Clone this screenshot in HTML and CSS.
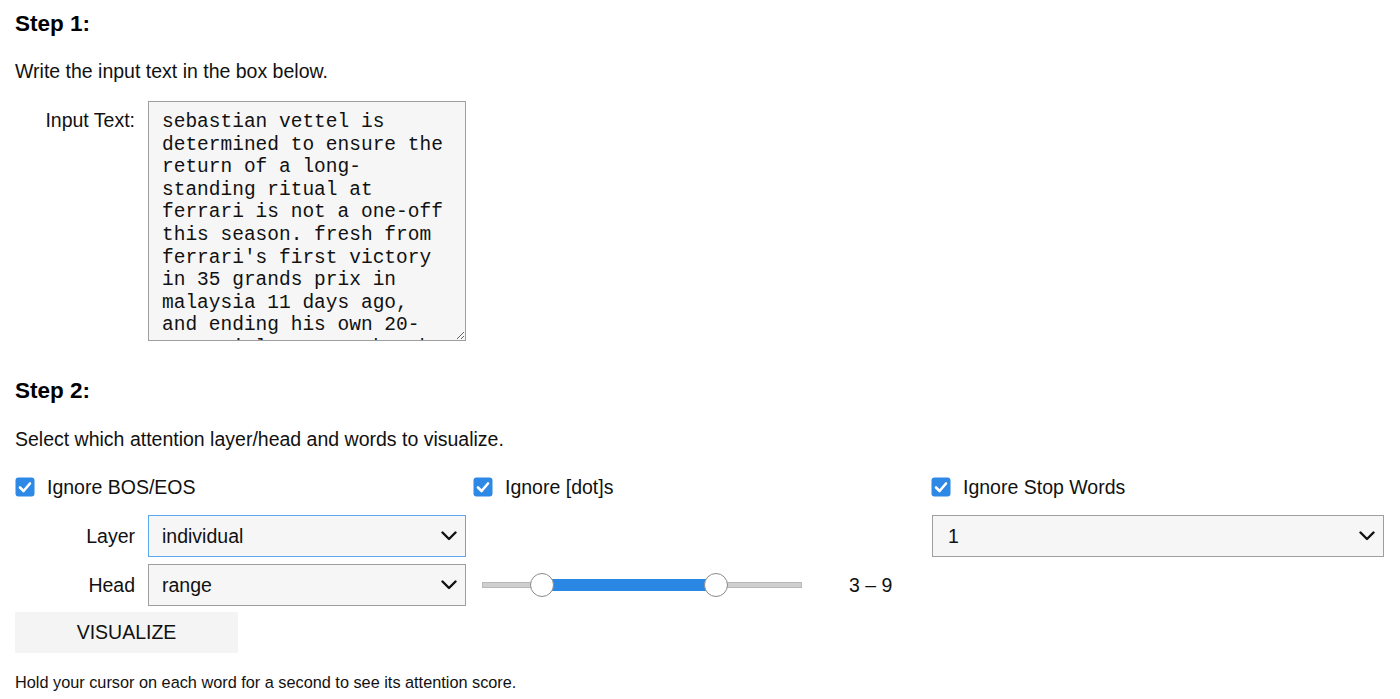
FILE: index.html
```html
<!DOCTYPE html>
<html>
<head>
<meta charset="utf-8">
<link rel="stylesheet" href="styles.css">
</head>
<body>
<div class="page">
  <h3 class="step">Step 1:</h3>
  <p class="intro">Write the input text in the box below.</p>
  <div class="input-row">
    <label class="desc desc-top" for="txt">Input Text:</label>
    <textarea id="txt" class="textarea" spellcheck="false">sebastian vettel is determined to ensure the return of a long-standing ritual at ferrari is not a one-off this season. fresh from ferrari's first victory in 35 grands prix in malaysia 11 days ago, and ending his own 20-race winless streak, the german is targeting more success in china.</textarea>
  </div>

  <h3 class="step step2">Step 2:</h3>
  <p class="intro intro2">Select which attention layer/head and words to visualize.</p>

  <div class="controls">
    <div class="cell check-cell">
      <span class="checkbox"><svg viewBox="0 0 20 20" width="20" height="20"><rect x="0.5" y="0.5" width="19" height="19" rx="3" fill="#2e89e6"/><path d="M5 10.5 L8.6 14 L15 6.5" fill="none" stroke="#fff" stroke-width="2.6" stroke-linecap="round" stroke-linejoin="round"/></svg></span>
      <span class="check-label">Ignore BOS/EOS</span>
    </div>
    <div class="cell check-cell">
      <span class="checkbox"><svg viewBox="0 0 20 20" width="20" height="20"><rect x="0.5" y="0.5" width="19" height="19" rx="3" fill="#2e89e6"/><path d="M5 10.5 L8.6 14 L15 6.5" fill="none" stroke="#fff" stroke-width="2.6" stroke-linecap="round" stroke-linejoin="round"/></svg></span>
      <span class="check-label">Ignore [dot]s</span>
    </div>
    <div class="cell check-cell">
      <span class="checkbox"><svg viewBox="0 0 20 20" width="20" height="20"><rect x="0.5" y="0.5" width="19" height="19" rx="3" fill="#2e89e6"/><path d="M5 10.5 L8.6 14 L15 6.5" fill="none" stroke="#fff" stroke-width="2.6" stroke-linecap="round" stroke-linejoin="round"/></svg></span>
      <span class="check-label">Ignore Stop Words</span>
    </div>

    <div class="cell field-row">
      <span class="desc">Layer</span>
      <div class="select focused"><span>individual</span><svg class="chev" viewBox="0 0 16 10" width="16" height="10"><path d="M1.5 1.5 L8 8 L14.5 1.5" fill="none" stroke="#111" stroke-width="2.4" stroke-linecap="round" stroke-linejoin="round"/></svg></div>
    </div>
    <div class="cell"></div>
    <div class="cell">
      <div class="select wide"><span>1</span><svg class="chev" viewBox="0 0 16 10" width="16" height="10"><path d="M1.5 1.5 L8 8 L14.5 1.5" fill="none" stroke="#111" stroke-width="2.4" stroke-linecap="round" stroke-linejoin="round"/></svg></div>
    </div>

    <div class="cell field-row">
      <span class="desc">Head</span>
      <div class="select"><span>range</span><svg class="chev" viewBox="0 0 16 10" width="16" height="10"><path d="M1.5 1.5 L8 8 L14.5 1.5" fill="none" stroke="#111" stroke-width="2.4" stroke-linecap="round" stroke-linejoin="round"/></svg></div>
    </div>
    <div class="cell slider-row">
      <div class="slider">
        <div class="track"></div>
        <div class="fill"></div>
        <div class="handle h1"></div>
        <div class="handle h2"></div>
      </div>
      <span class="readout">3 – 9</span>
    </div>
    <div class="cell"></div>
  </div>

  <button class="btn">VISUALIZE</button>
  <p class="hint">Hold your cursor on each word for a second to see its attention score.</p>
</div>
</body>
</html>
```

FILE: styles.css
```css
html, body {
  margin: 0;
  padding: 0;
  background: #ffffff;
}
body {
  font-family: "Liberation Sans", Arial, Helvetica, sans-serif;
  color: #111;
}
.page {
  padding: 0 0 0 15px;
  overflow: hidden;
  height: 699px;
  box-sizing: border-box;
}
.step {
  margin: 11px 0 0 0;
  font-size: 22.5px;
  line-height: 26px;
  font-weight: bold;
  color: #000;
}
.step2 {
  margin-top: 37px;
}
.intro {
  margin: 22px 0 0 0;
  font-size: 19.5px;
  line-height: 24px;
}
.intro2 {
  margin-top: 23px;
}
.input-row {
  display: flex;
  align-items: flex-start;
  margin-top: 18px;
}
.desc {
  width: 120px;
  flex: 0 0 120px;
  text-align: right;
  margin-right: 13px;
  font-size: 19.5px;
  color: #111;
}
.desc-top {
  line-height: 39px;
}
.textarea {
  width: 318px;
  height: 240px;
  box-sizing: border-box;
  margin: 0;
  padding: 9px 16px 6px 13px;
  border: 1px solid #9e9e9e;
  background: #f6f6f6;
  font-family: "Liberation Mono", "Courier New", monospace;
  font-size: 19.5px;
  line-height: 22.6px;
  color: #111;
  overflow: hidden;
  resize: both;
  outline: none;
}
.controls {
  display: grid;
  grid-template-columns: 458px 458px 458px;
  grid-template-rows: 41px 42px 42px;
  row-gap: 7px;
  margin-top: 16px;
}
.cell {
  display: flex;
  align-items: center;
}
.check-cell {
  align-self: start;
  height: 39px;
}
.checkbox {
  width: 20px;
  height: 20px;
  display: inline-block;
  margin-right: 12px;
}
.checkbox svg {
  display: block;
}
.check-label {
  font-size: 19.5px;
  line-height: 24px;
}
.field-row .desc {
  line-height: 42px;
}
.select {
  width: 318px;
  height: 42px;
  box-sizing: border-box;
  border: 1px solid #9e9e9e;
  background: #f6f6f6;
  display: flex;
  align-items: center;
  justify-content: space-between;
  padding: 0 8px 0 13px;
  font-size: 19.5px;
}
.select.focused {
  border-color: #5fa8ee;
}
.select.wide {
  width: 452px;
  margin-left: 1px;
  padding-left: 15px;
}
.chev {
  display: block;
}
.slider-row {
  padding-left: 9px;
}
.slider {
  position: relative;
  width: 320px;
  height: 26px;
}
.track {
  position: absolute;
  left: 0;
  right: 0;
  top: 10px;
  height: 6px;
  box-sizing: border-box;
  background: #cfcfcf;
  border: 1px solid #b8b8b8;
}
.fill {
  position: absolute;
  left: 60px;
  width: 174px;
  top: 7px;
  height: 12px;
  background: #2a88e4;
}
.handle {
  position: absolute;
  top: 1px;
  width: 24px;
  height: 24px;
  box-sizing: border-box;
  border-radius: 50%;
  border: 1px solid #8a8a8a;
  background: #fff;
}
.h1 {
  left: 48px;
}
.h2 {
  left: 222px;
}
.readout {
  margin-left: 47px;
  font-size: 19.5px;
}
.btn {
  display: block;
  margin: 6px 0 0 0;
  width: 223px;
  height: 41px;
  border: none;
  background: #f4f4f4;
  font-family: "Liberation Sans", Arial, sans-serif;
  font-size: 19.5px;
  color: #111;
  padding: 0;
}
.hint {
  margin: 19px 0 0 0;
  font-size: 16.3px;
  line-height: 20px;
}
```
